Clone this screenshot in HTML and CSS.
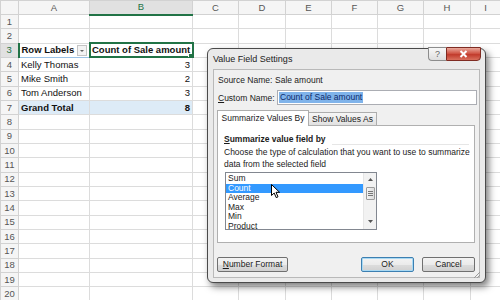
FILE: index.html
```html
<!DOCTYPE html>
<html lang="en">
<head>
    <meta charset="UTF-8">
    <title>Value Field Settings</title>
    <link rel="stylesheet" href="styles.css">
</head>
<body>

    <div class="sheet">
        <table class="grid">
            <colgroup>
                <col class="c-rh"><col class="c-a"><col class="c-b"><col class="c-c"><col class="c-d">
                <col class="c-e"><col class="c-f"><col class="c-g"><col class="c-h"><col class="c-i">
            </colgroup>
            <thead>
                <tr>
                    <th class="corner"></th>
                    <th>A</th><th class="sel">B</th><th>C</th><th>D</th>
                    <th>E</th><th>F</th><th>G</th><th>H</th><th>I</th>
                </tr>
            </thead>
            <tbody id="rows"></tbody>
        </table>

        <div class="dialog">
            <div class="titlebar">Value Field Settings</div>
            <div class="caption-buttons">
                <div class="cap-help">?</div>
                <div class="cap-close">
                    <svg width="9" height="8" viewBox="0 0 9 8"><path d="M1.5 1 L7.5 7 M7.5 1 L1.5 7" stroke="#fff" stroke-width="2"/></svg>
                </div>
            </div>

            <div class="client">
                <div class="source-row">
                    <span class="source-label">Source Name:</span>
                    <span>Sale amount</span>
                </div>
                <div class="custom-row">
                    <span class="custom-label"><u>C</u>ustom Name:</span>
                    <div class="name-input"><span class="selected-text">Count of Sale amount</span></div>
                </div>

                <div class="tabs">
                    <div class="tab active">Summarize Values By</div>
                    <div class="tab">Show Values As</div>
                </div>
                <div class="panel">
                    <div class="group-head">
                        <span><u>S</u>ummarize value field by</span>
                        <span class="group-line"></span>
                    </div>
                    <div class="desc">Choose the type of calculation that you want to use to summarize<br>data from the selected field</div>
                    <div class="listbox">
                        <div class="list-items">
                            <div class="item">Sum</div>
                            <div class="item selected">Count</div>
                            <div class="item">Average</div>
                            <div class="item">Max</div>
                            <div class="item">Min</div>
                            <div class="item">Product</div>
                        </div>
                        <div class="scrollbar">
                            <svg class="arrow" width="5" height="3" viewBox="0 0 5 3"><path d="M0 3 L2.5 0 L5 3 Z" fill="#555"/></svg>
                            <div class="thumb"><span></span><span></span><span></span></div>
                            <svg class="arrow down" width="5" height="3" viewBox="0 0 5 3"><path d="M0 0 L2.5 3 L5 0 Z" fill="#555"/></svg>
                        </div>
                    </div>
                </div>

                <div class="buttons">
                    <div class="btn number-format"><u>N</u>umber Format</div>
                    <div class="spacer"></div>
                    <div class="btn ok">OK</div>
                    <div class="btn cancel">Cancel</div>
                </div>
            </div>

            <svg class="grip" width="6" height="6" viewBox="0 0 6 6">
                <path d="M6 0 L0 6 M6 3 L3 6" stroke="#9a9a9a" stroke-width="1"/>
            </svg>
            <svg class="cursor" width="10" height="15" viewBox="0 0 10 15">
                <path d="M0.5 0.5 L0.5 11.5 L3.2 9 L5.2 13.6 L7 12.8 L5 8.3 L8.6 8.3 Z" fill="#fff" stroke="#000" stroke-width="1"/>
            </svg>
        </div>
    </div>

    <script>
        // Pivot table contents, keyed by spreadsheet row
        const data = {
            3: ["Row Labels", "Count of Sale amount"],
            4: ["Kelly Thomas", "3"],
            5: ["Mike Smith", "2"],
            6: ["Tom Anderson", "3"],
            7: ["Grand Total", "8"]
        };
        const tbody = document.getElementById("rows");

        for (let r = 1; r <= 20; r++) {
            const tr = document.createElement("tr");
            if (r === 3) tr.className = "head-row";
            if (r === 7) tr.className = "total-row";

            const rh = document.createElement("th");
            rh.textContent = r;
            if (r === 3) rh.className = "sel";
            tr.appendChild(rh);

            const values = data[r] || ["", ""];
            const a = document.createElement("td");
            const b = document.createElement("td");
            a.className = "col-a";
            b.className = "col-b";

            if (r === 3) {
                a.innerHTML = `<div class="label-cell"><span>${values[0]}</span><span class="filter-btn"></span></div>`;
                b.className += " active-cell";
                b.innerHTML = `<span>${values[1]}</span><span class="fill-handle"></span>`;
            } else {
                a.textContent = values[0];
                b.textContent = values[1];
                if (values[1]) b.classList.add("num");
            }
            tr.appendChild(a);
            tr.appendChild(b);

            for (let c = 0; c < 7; c++) {
                tr.appendChild(document.createElement("td"));
            }
            tbody.appendChild(tr);
        }
    </script>

</body>
</html>
```

FILE: styles.css
```css
body {
    margin: 0;
    background-color: #fff;
    overflow: hidden;
    font-family: "Liberation Sans", Arial, sans-serif;
}
.sheet {
    position: relative;
    width: 500px;
    height: 300px;
    overflow: hidden;
}

/* spreadsheet */
.grid {
    border-collapse: collapse;
    table-layout: fixed;
    width: 500px;
    font-size: 9.5px;
}
.c-rh { width: 18px; }
.c-a { width: 71px; }
.c-b { width: 103px; }
.c-c { width: 46px; }
.c-d { width: 47px; }
.c-e { width: 46px; }
.c-f { width: 46px; }
.c-g { width: 46px; }
.c-h { width: 47px; }
.c-i { width: 30px; }
.grid thead tr {
    height: 14px;
}
.grid tbody tr {
    height: 14.33px;
}
.grid th, .grid td {
    border: 1px solid #dcdcdc;
    padding: 0 2px;
    line-height: 12px;
    white-space: nowrap;
    overflow: hidden;
    color: #111;
}
.grid th {
    background-color: #f5f5f5;
    color: #555;
    font-weight: normal;
    text-align: center;
    border-color: #d2d2d2;
}
.grid th.sel {
    background-color: #e1e1e1;
    color: #217346;
}
.grid thead th.sel {
    border-bottom: 2px solid #217346;
}
.grid tbody th.sel {
    border-right: 2px solid #217346;
}
.grid tbody th {
    padding: 0;
}
.head-row td.col-a, .head-row td.col-b {
    font-weight: bold;
    border-bottom: 1px solid #9bc2e6;
}
.total-row td.col-a, .total-row td.col-b {
    font-weight: bold;
    background-color: #ddebf7;
    border-top: 1px solid #9bc2e6;
}
.grid td.num {
    text-align: right;
}
.label-cell {
    display: flex;
    align-items: center;
    justify-content: space-between;
}
.filter-btn {
    position: relative;
    width: 8px;
    height: 9px;
    border: 1px solid #c4c4c4;
    background-color: #f3f3f3;
}
.filter-btn::after {
    content: "";
    position: absolute;
    left: 2px;
    top: 4px;
    border-left: 2px solid transparent;
    border-right: 2px solid transparent;
    border-top: 2px solid #666;
}
.active-cell {
    position: relative;
    outline: 2px solid #217346;
    outline-offset: -1px;
}
.fill-handle {
    position: absolute;
    right: -2px;
    bottom: -2px;
    width: 4px;
    height: 4px;
    background-color: #217346;
    border: 1px solid #fff;
}

/* dialog */
.dialog {
    position: absolute;
    left: 207px;
    top: 48px;
    width: 279px;
    height: 235px;
    box-sizing: border-box;
    border: 1px solid #4a4a4a;
    border-radius: 6px;
    background-color: #eaeaea;
    box-shadow: 3px 4px 7px rgba(0, 0, 0, 0.5);
    display: flex;
    flex-direction: column;
    font-size: 8.5px;
    color: #1b1b1b;
}
.titlebar {
    height: 20px;
    padding-left: 5px;
    display: flex;
    align-items: center;
    font-size: 9px;
    color: #222;
}
.caption-buttons {
    position: absolute;
    top: -2px;
    right: 4px;
    display: flex;
}
.cap-help {
    width: 18px;
    height: 14px;
    box-sizing: border-box;
    border: 1px solid #8c8c8c;
    border-right: none;
    border-radius: 0 0 0 4px;
    background: linear-gradient(#f8f8f8, #dedede);
    color: #666;
    font-size: 9px;
    text-align: center;
    line-height: 13px;
}
.cap-close {
    width: 35px;
    height: 14px;
    box-sizing: border-box;
    border: 1px solid #7f2b22;
    border-radius: 0 0 4px 0;
    background: linear-gradient(#e9a99c, #d05646 45%, #c13b2c 55%, #d9705d);
    display: flex;
    align-items: center;
    justify-content: center;
}
.client {
    flex: 1;
    margin: 0 5px 4px 5px;
    border: 1px solid #b9b9b9;
    background-color: #f0f0f0;
    padding: 4px 0 0 0;
    display: flex;
    flex-direction: column;
    position: relative;
}
.source-row {
    height: 12px;
    padding-left: 4px;
    display: flex;
    align-items: center;
}
.source-label {
    width: 57px;
}
.custom-row {
    height: 15px;
    margin-top: 4px;
    padding-left: 4px;
    display: flex;
    align-items: center;
}
.custom-label {
    width: 59px;
}
.name-input {
    width: 200px;
    height: 15px;
    box-sizing: border-box;
    border: 1px solid #abadb3;
    background-color: #fff;
    padding: 0 1px;
    display: flex;
    align-items: center;
}
.selected-text {
    background-color: #7fb3ea;
    color: #0c2a6b;
    line-height: 11px;
    padding: 0 1px;
}
.tabs {
    display: flex;
    align-items: flex-end;
    margin: 5px 0 0 3px;
    height: 15px;
    position: relative;
    z-index: 1;
}
.tab {
    width: 68px;
    height: 13px;
    box-sizing: border-box;
    border: 1px solid #adadad;
    border-left: none;
    border-bottom: none;
    background: linear-gradient(#f6f6f6, #e1e1e1);
    text-align: center;
    line-height: 12px;
}
.tab.active {
    width: 92px;
    height: 16px;
    margin-bottom: -1px;
    border-left: 1px solid #adadad;
    background: #fff;
    line-height: 15px;
}
.panel {
    margin: 0 4px 0 3px;
    height: 118px;
    box-sizing: border-box;
    border: 1px solid #b0b0b0;
    background-color: #fff;
    padding: 7px 0 0 6px;
}
.group-head {
    height: 11px;
    display: flex;
    align-items: center;
    font-weight: bold;
}
.group-line {
    flex: 1;
    align-self: flex-end;
    margin: 0 5px -1px 6px;
    border-top: 1px solid #e6e6e6;
}
.desc {
    margin-top: 2px;
    line-height: 12px;
    white-space: nowrap;
}
.listbox {
    margin: 2px 0 0 1px;
    width: 152px;
    height: 58px;
    box-sizing: border-box;
    border: 1px solid #828790;
    display: flex;
}
.list-items {
    flex: 1;
    padding-top: 1px;
}
.item {
    height: 9.5px;
    line-height: 9.5px;
    padding-left: 2px;
}
.item.selected {
    background-color: #3399ff;
    color: #fff;
}
.scrollbar {
    width: 12px;
    background-color: #f2f2f2;
    border-left: 1px solid #e6e6e6;
    display: flex;
    flex-direction: column;
    align-items: center;
}
.arrow {
    margin-top: 5px;
}
.arrow.down {
    margin-top: auto;
    margin-bottom: 6px;
}
.thumb {
    margin-top: 6px;
    width: 9px;
    height: 13px;
    box-sizing: border-box;
    border: 1px solid #9c9c9c;
    border-radius: 1px;
    background: linear-gradient(90deg, #f4f4f4, #dcdcdc);
    display: flex;
    flex-direction: column;
    align-items: center;
    justify-content: center;
    gap: 1px;
}
.thumb span {
    width: 5px;
    height: 1px;
    background-color: #777;
}
.buttons {
    display: flex;
    height: 15px;
    margin-top: 14px;
    padding-left: 3px;
}
.btn {
    height: 15px;
    box-sizing: border-box;
    border: 1px solid #707070;
    border-radius: 2px;
    background: linear-gradient(#f3f3f3, #ebebeb 50%, #dddddd 51%, #d0d0d0);
    text-align: center;
    line-height: 13px;
}
.number-format {
    width: 71px;
}
.spacer {
    flex: 1;
}
.ok {
    width: 53px;
    margin-right: 8px;
    border-color: #3c7fb1;
    box-shadow: inset 0 0 0 1px #a9d9f3;
}
.cancel {
    width: 53px;
    margin-right: 4px;
}
.grip {
    position: absolute;
    right: 5px;
    bottom: 4px;
}
.cursor {
    position: absolute;
    left: 63px;
    top: 135px;
}
```
